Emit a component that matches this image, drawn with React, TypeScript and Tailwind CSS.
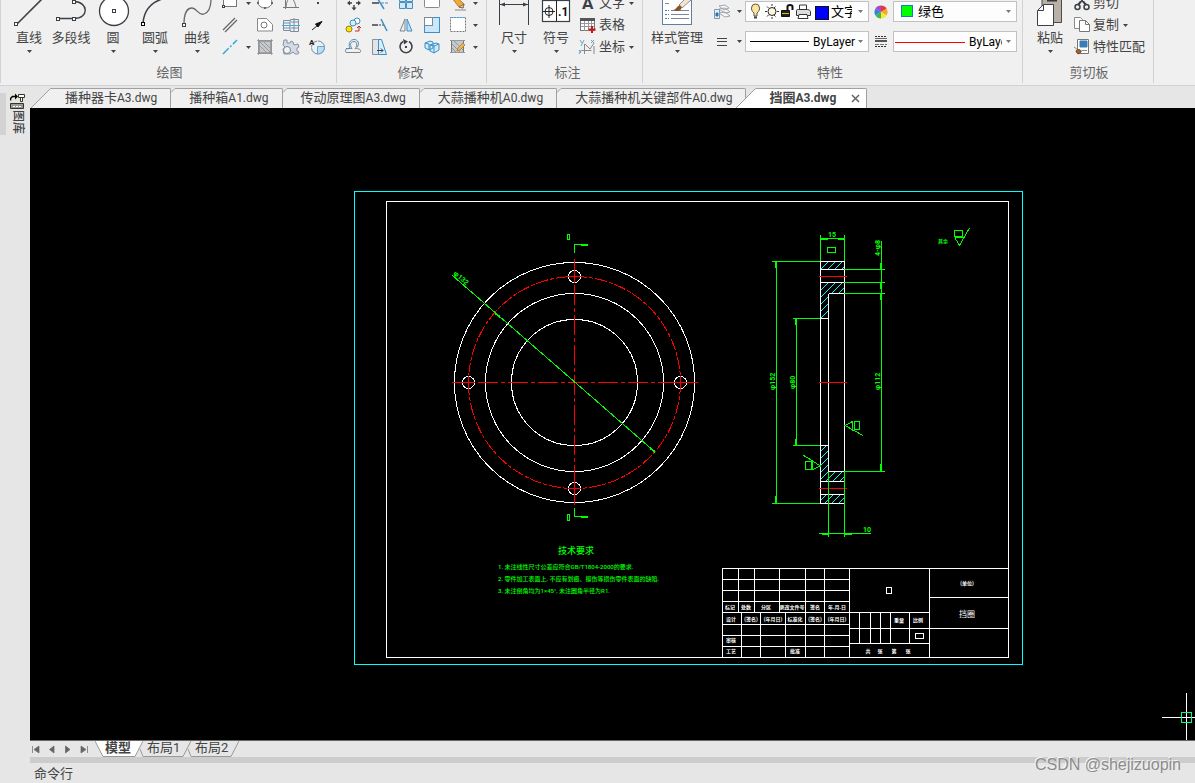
import type { ReactNode } from "react";

const INK = "#3b3f46";
const BLUE = "#3f8fc4";

interface IconProps {
  width?: number;
  height?: number;
  children: ReactNode;
}

function Icon({ width = 26, height = 22, children }: IconProps) {
  return (
    <svg
      width={width}
      height={height}
      viewBox={`0 0 ${width} ${height}`}
      fill="none"
      stroke={INK}
      className="shrink-0"
      aria-hidden="true"
    >
      {children}
    </svg>
  );
}

function Caret({ light = false }: { light?: boolean }) {
  return (
    <svg width="5" height="3" viewBox="0 0 5 3" className="shrink-0" aria-hidden="true">
      <path d="M0 0h5L2.5 3z" fill={light ? "#777" : "#444"} />
    </svg>
  );
}

function DropButton({ label, className }: { label: string; className: string }) {
  return (
    <button aria-label={label} className={`flex items-center justify-center ${className}`}>
      <Caret />
    </button>
  );
}

function Panel({ title, className, children }: { title: string; className: string; children: ReactNode }) {
  return (
    <section className={`flex h-[83px] shrink-0 flex-col border-r border-[#d2d2d2] ${className}`}>
      <div className="flex h-[58px] shrink-0 items-end overflow-hidden">{children}</div>
      <h2 className="mt-[5px] text-center leading-5 text-[#666]">{title}</h2>
    </section>
  );
}

interface LargeToolProps {
  label: string;
  caret?: boolean;
  className?: string;
  children: ReactNode;
}

function LargeTool({ label, caret = true, className = "w-[42px]", children }: LargeToolProps) {
  return (
    <button className={`flex shrink-0 flex-col items-center ${className}`}>
      {children}
      <span className="leading-5 whitespace-nowrap">{label}</span>
      <span className="flex h-[10px] pt-0.5">{caret ? <Caret /> : null}</span>
    </button>
  );
}

function SmallTool({ label, children }: { label: string; children: ReactNode }) {
  return (
    <button aria-label={label} className="block h-[22px] w-[26px]">
      <Icon>{children}</Icon>
    </button>
  );
}

function TextTool({ label, caret, children }: { label: string; caret?: boolean; children: ReactNode }) {
  return (
    <button className="flex h-[22px] items-center whitespace-nowrap">
      <Icon width={22}>{children}</Icon>
      {label}
      {caret ? (
        <span className="ml-1">
          <Caret />
        </span>
      ) : null}
    </button>
  );
}

function DrawPanel() {
  return (
    <Panel title="绘图" className="border-l pr-[5px] pl-[7px]">
      <LargeTool label="直线">
        <Icon width={42} height={28}>
          <path d="M9 24 34-1" strokeWidth="1.6" />
          <rect x="6.500" y="22.500" width="3" height="3" fill="#fff" />
        </Icon>
      </LargeTool>
      <LargeTool label="多段线" caret={false}>
        <Icon width={42} height={28}>
          <path d="M9 18.500h15C39 18.500 39 2 24 1.500" strokeWidth="1.400" />
          <rect x="6.500" y="17.500" width="3" height="3" fill="#fff" />
          <rect x="22.500" y="17.500" width="3" height="3" fill="#fff" />
          <rect x="22.500" y="0.500" width="3" height="3" fill="#fff" />
        </Icon>
      </LargeTool>
      <LargeTool label="圆">
        <Icon width={42} height={28}>
          <circle cx="22" cy="11" r="14.500" fill="#fff" strokeWidth="1.300" />
          <rect x="20.500" y="9.500" width="3" height="3" fill="#fff" />
        </Icon>
      </LargeTool>
      <LargeTool label="圆弧">
        <Icon width={42} height={28}>
          <path d="M9 23C10 11 16 3 28-1" strokeWidth="1.500" />
          <rect x="7.500" y="22.500" width="3" height="3" fill="#fff" stroke="#000" />
        </Icon>
      </LargeTool>
      <LargeTool label="曲线">
        <Icon width={42} height={28}>
          <path d="M8 24C8 14 11 8 16 8s6 8 12 6 7-8 7-15" stroke="#666a70" strokeWidth="1.300" />
          <rect x="6.500" y="23.500" width="3" height="3" fill="#fff" />
        </Icon>
      </LargeTool>
      <div>
        <SmallTool label="矩形">
          <rect x="5.500" y="2.500" width="13" height="12" fill="#fff" stroke="#777" />
          <rect x="4.500" y="13.500" width="2" height="2" fill="#fff" />
        </SmallTool>
        <SmallTool label="平行线">
          <path d="m5 16 12-12M7 18 19 6" stroke="#666" strokeWidth="1.300" />
        </SmallTool>
        <SmallTool label="中心线">
          <path d="m5 18 14-14" stroke="#34a9e0" strokeWidth="1.500" strokeDasharray="8 2 2 2" />
        </SmallTool>
      </div>
      <div>
        <DropButton label="矩形选项" className="h-[22px] w-[9px]" />
        <span className="block h-[22px]" />
        <DropButton label="中心线选项" className="h-[22px] w-[9px]" />
      </div>
      <div>
        <SmallTool label="椭圆">
          <ellipse cx="12" cy="10.500" rx="7" ry="5.500" fill="#fff" stroke="#777" />
          <path d="M4 11h2m12 0h2m-9 5h2" stroke="#666" strokeWidth="2" />
        </SmallTool>
        <SmallTool label="轮廓线">
          <path d="M4.500 4.500h9l6 6v6.500h-15z" fill="#fff" stroke="#888" />
          <circle cx="11" cy="11" r="3" stroke="#777" />
        </SmallTool>
        <SmallTool label="图案填充">
          <rect x="6" y="5" width="12" height="12" fill="#c6c9cc" stroke="#777" />
          <path d="m7 6 10 10M7 10l6 6m-2-10 6 6M4 4.500h16M4 17.500h16M5.500 3v16m13-16v16" stroke="#888" strokeWidth=".7" />
        </SmallTool>
      </div>
      <div>
        <SmallTool label="公式曲线">
          <path d="M6.500 4v13M4 15.500h16M7 15C8 4 14 2 17 15" stroke="#777" />
        </SmallTool>
        <SmallTool label="孔轴">
          <path d="M4.500 6.500h7v-1h8v12h-8v-1h-7z" fill="#eef3f7" stroke="#7d8d9c" />
          <path d="M4 9h7m0-3v11m4-13v13M5 14h6m1-6h7m-7 6h7" stroke="#7d8d9c" />
          <path d="M3 11.500h18" stroke="#46a6e2" />
        </SmallTool>
        <SmallTool label="齿形">
          <path d="M5 4h3v3h3l1-2 2 1 1 3 4-1 1 3-2 1v3l2 1-1 2h-3l-2-2-3 2H5l-1-5 2-2-2-2z" fill="#d3dae3" stroke="#8493a4" />
          <circle cx="8" cy="14" r="3.500" fill="#f4f4f4" stroke="#7b8795" />
        </SmallTool>
      </div>
      <div>
        <SmallTool label="点">
          <rect x="12" y="10" width="2" height="2" fill="#444" stroke="none" />
        </SmallTool>
        <SmallTool label="箭头">
          <path d="m7 16 6-5" stroke="#222" />
          <path d="M17 7.500 10.500 10l2.500 3z" fill="#111" stroke="#111" />
        </SmallTool>
        <SmallTool label="局部放大">
          <circle cx="13" cy="11.500" r="6.500" stroke="#6f8494" strokeDasharray="9 1" />
          <path d="M12.500 10.500h7a7 7 0 0 1-7 7.500z" fill="#b7e0f8" stroke="#64a6cf" />
          <text x="4" y="9" fontSize="8" fontWeight="700" fill="#222" stroke="none">A</text>
        </SmallTool>
      </div>
    </Panel>
  );
}

function ModifyPanel() {
  return (
    <Panel title="修改" className="pr-1.5 pl-1">
      <div>
        <SmallTool label="平移">
          <path d="M7 11h4m4 0h4m-6-7v4m0 5v4" strokeWidth="1.400" />
          <path d="m6 11 3-2.500v5zm14 0-3-2.500v5zM13 18.500l-2.500-3h5z" fill={INK} stroke="none" />
        </SmallTool>
        <SmallTool label="平移复制">
          <circle cx="16" cy="7" r="3" fill="#fff" stroke={BLUE} />
          <circle cx="12" cy="9" r="3" fill="#d9edf9" stroke={BLUE} />
          <circle cx="8" cy="15" r="3" fill="#ffe600" stroke="#917f22" />
          <path d="M14 17h4v-4m-2 1 2-2 2 2" stroke="#b62f2f" />
        </SmallTool>
        <SmallTool label="等距线">
          <path d="M5 16.500h14c2-3-1-4-5-4 3-3 2-7-1-7s-5 3-2 7c-5 0-8 0-6 4z" stroke="#7e8790" />
          <path d="M5 12.500h4C7 8 9 3.500 13 3.500s6 4 3 8" stroke={BLUE} />
        </SmallTool>
      </div>
      <div>
        <SmallTool label="裁剪">
          <path d="M5 11h7" strokeWidth="1.500" />
          <path d="M14 11h8" stroke={BLUE} strokeDasharray="3 1" />
          <path d="m9 4 8 13" stroke={BLUE} strokeWidth="1.500" />
        </SmallTool>
        <SmallTool label="延伸">
          <path d="M5 11h6" strokeWidth="1.500" />
          <path d="M12 11h6" strokeDasharray="2 1" />
          <path d="m14 5 6 12" stroke={BLUE} strokeWidth="1.500" />
        </SmallTool>
        <SmallTool label="拉伸">
          <path d="M5.500 3.500h6v15h-6z" fill="#e2e5e8" stroke="#88929b" />
          <path d="M11.500 3.500h3l5 15h-8z" fill="#d7effc" stroke={BLUE} />
          <path d="M10 14.500h6m-2-2 2 2-2 2" />
        </SmallTool>
      </div>
      <div>
        <SmallTool label="阵列">
          <path d="M6.500 3.500h6v6h-6zm7 0h6v6h-6zm-7 7h6v6h-6zm7 0h6v6h-6z" fill="#cdeafa" stroke="#4d8fb8" />
        </SmallTool>
        <SmallTool label="镜像">
          <path d="M12 5v12H7z" fill="#eee" stroke="#7a858f" />
          <path d="M14 5v12h5z" fill="#bfe3f7" stroke={BLUE} />
        </SmallTool>
        <SmallTool label="旋转">
          <path d="M10 5.500a6 6 0 1 0 6 0" strokeWidth="1.600" />
          <path d="m10 3 5 2.500-4 3z" fill={INK} stroke="none" />
          <rect x="12" y="10" width="2" height="2" fill={INK} stroke="none" />
        </SmallTool>
      </div>
      <div>
        <SmallTool label="打断">
          <rect x="5.500" y="2.500" width="15" height="13" rx="1" fill="#fff" stroke="#8a8a8a" />
        </SmallTool>
        <SmallTool label="比例缩放">
          <rect x="5.500" y="3.500" width="15" height="15" fill="#c9e8fa" stroke={BLUE} />
          <rect x="5.500" y="3.500" width="8" height="8" fill="#fff" stroke="#7b8a96" />
        </SmallTool>
        <SmallTool label="分解">
          <path d="m6 7 5-2 3 1v6l-4 2-4-2zm5 2 6-2 3 1v6l-5 3-4-2zm0 0 4 1 5-2m-5 2v7M6 7l4 1v6" fill="#cdebfa" stroke={BLUE} />
        </SmallTool>
      </div>
      <div>
        <SmallTool label="删除">
          <path d="m7 6 3-2 9 8-1 4-4-1z" fill="#f2aa3c" stroke="#b77a23" />
          <path d="m14 15 4 1 1-4z" fill="#ecd7b8" stroke="#806d54" />
          <path d="m6 6 3-3" stroke="#d86b5c" strokeWidth="3" />
          <path d="M10 18h11" stroke="#888" />
        </SmallTool>
        <SmallTool label="选择">
          <rect x="5.500" y="3.500" width="15" height="14" fill="#fff" stroke="#777" strokeDasharray="2 1" />
          <path d="M6 3.500h14" stroke="#3ca4dc" strokeDasharray="2 1" />
        </SmallTool>
        <SmallTool label="填充编辑">
          <rect x="6.500" y="4.500" width="12" height="12" fill="#c5c8cb" stroke="#777" />
          <path d="m7 8 8 8M7 12l4 4M9 5l9 9M5 4.500h15M5 16.500h15" stroke="#979797" />
          <path d="m12 15 1-3 5-5 2 2-5 5z" fill="#f1b34b" stroke="#9e7330" strokeWidth=".7" />
        </SmallTool>
      </div>
      <div>
        <DropButton label="删除选项" className="h-[22px] w-[9px]" />
        <DropButton label="选择选项" className="h-[22px] w-[9px]" />
        <DropButton label="填充编辑选项" className="h-[22px] w-[9px]" />
      </div>
    </Panel>
  );
}

function AnnotatePanel() {
  return (
    <Panel title="标注" className="w-[156px] pl-1.5">
      <LargeTool label="尺寸">
        <Icon width={42} height={28}>
          <path d="M6.500 0v25M35.500 0v25M7 4.500h28" />
          <path d="m7 4.500 5-2v4zm28 0-5-2v4z" fill={INK} stroke="none" />
        </Icon>
      </LargeTool>
      <LargeTool label="符号">
        <Icon width={42} height={28}>
          <rect x="7.500" y="0.500" width="27" height="21" fill="#fff" strokeWidth="1.200" />
          <path d="M21.500 0v21M8 11.500h12M14 5v13" stroke="#222" />
          <circle cx="14" cy="11.500" r="4" stroke="#222" />
          <text x="23" y="16" fontSize="12" fontWeight="700" fill="#111" stroke="none">.1</text>
        </Icon>
      </LargeTool>
      <div>
        <TextTool label="文字" caret>
          <text x="5" y="17" fontSize="17" fontWeight="700" fill={INK} stroke="none">A</text>
        </TextTool>
        <TextTool label="表格">
          <rect x="3.500" y="4.500" width="14" height="12" fill="#fff" stroke="#777" />
          <path d="M3 5.500h15" stroke="#555" strokeWidth="3" />
          <path d="M4 9.500h13m-13 3h13M7.500 7v10m4-10v10m3-10v10" stroke="#999" />
          <path d="M15 12v7m-3.500-3.500h7" stroke="#c4161c" strokeWidth="2" />
        </TextTool>
        <TextTool label="坐标" caret>
          <path d="M7.500 8v10m-3-3.500h10M8 8l5 5 4-6m0 11v-8" stroke="#888" />
          <path d="m3 4 2 3m2-3-3 6m10-6 3 3m0-3-3 3M2 14l2 3m0-3-2 4" stroke={BLUE} strokeWidth=".8" />
        </TextTool>
      </div>
    </Panel>
  );
}

const wheel = ["#e53935", "#f5a623", "#f7e733", "#43b649", "#2f80e0", "#a04bd1"];

function ColorWheel() {
  return (
    <Icon width={14} height={14}>
      {wheel.map((color, i) => (
        <path key={color} d="M7 7V0.500A6.500 6.500 0 0 1 12.630 3.750z" fill={color} stroke="none" transform={`rotate(${i * 60} 7 7)`} />
      ))}
    </Icon>
  );
}

interface ComboProps {
  label: string;
  value: string;
  selectClass: string;
  children: ReactNode;
}

function Combo({ label, value, selectClass, children }: ComboProps) {
  return (
    <label className="flex h-[21px] w-[124px] items-center border border-[#c1c1c1] bg-[#fdfdfd] pr-[5px] pl-px text-black">
      {children}
      <select aria-label={label} className={`shrink-0 appearance-none overflow-hidden bg-transparent text-clip ${selectClass}`}>
        <option>{value}</option>
      </select>
      <span className="ml-auto flex">
        <Caret light />
      </span>
    </label>
  );
}

function PropertiesPanel() {
  return (
    <Panel title="特性" className="pr-[5px]">
      <LargeTool label="样式管理" className="w-[68px]">
        <Icon width={68} height={28}>
          <rect x="19.500" y="-2" width="29" height="26.500" fill="#fff" stroke="#5f7f9f" />
          <path d="M22 10.500h4m-4 4h4m-4 4h4" stroke="#4d78a3" strokeDasharray="2 1" />
          <path d="M28 10.500h18m-18 4h18m-18 4h18M22 3.500h4" stroke="#79899a" />
          <path d="m36 5 8-8 4 3-9 8z" fill="#f2e5cf" stroke="#666" strokeWidth=".7" />
          <path d="M30 10c4 0 4-6 8-4 2 3-2 7-8 4z" fill="#8d5125" stroke="none" />
        </Icon>
      </LargeTool>
      <div className="flex h-[57px] items-start">
        <div className="flex flex-col gap-[9px]">
          <div className="flex h-[21px] items-center">
            <Icon width={22}>
              <path d="m8 5 6-1 4 3-5 2zm0 3 6-1 5 4-5 1zm0 4 6-1 5 4-5 1z" fill="#f8f8f8" stroke="#a0a5aa" />
              <path d="M3.500 8.500h5v9h-5z" fill="#e9eff4" stroke="#7c9ab6" />
              <path d="M5 12h2v3H5z" fill="#2d73b5" stroke="#2d73b5" />
            </Icon>
            <DropButton label="图层工具" className="h-[21px] w-3" />
          </div>
          <div className="flex h-[21px] items-center">
            <Icon width={22} height={21}>
              <path d="M6 7.500h10m-10 3h10m-10 4h10" stroke="#444" />
            </Icon>
            <DropButton label="线宽工具" className="h-[21px] w-3" />
          </div>
        </div>
        <div className="flex flex-col gap-[9px]">
          <Combo label="图层" value="文字" selectClass="w-[21px]">
            <Icon width={84} height={19}>
              <path d="M7 14v-3C4.500 9 4.500 7 4.500 6a4 4 0 0 1 8 0c0 1 0 3-2.500 5v3z" fill="#ffe59a" stroke="#555" />
              <path d="M7 15.500h3" stroke="#444" strokeWidth="2" />
              <circle cx="25" cy="9.500" r="4" fill="#fff7e0" stroke="#222" />
              <path d="M25 2v2m0 11v2M18 9.500h2m10 0h2M20 4.500l1.500 1.500m7-1.500L27 6m-7 8.500 1.500-1.500m7 1.500L27 13" stroke="#333" />
              <path d="M34.500 8.500h8v6h-8z" fill="#222" stroke="#111" />
              <path d="M35 11.500h7" stroke="#d7c800" />
              <path d="M40.500 9V4.500c0-2 5-2 5 0V8" stroke="#111" strokeWidth="2" />
              <path d="M52.500 8V3h7v5" fill="#fff" stroke="#333" />
              <path d="M49.500 8.500c0-1 1-1 2-1h9c1 0 3 1 3 2v4h-14z" fill="#dcdcdc" stroke="#333" />
              <path d="M52 12.500h8l1 4H51z" fill="#fff" stroke="#333" />
              <rect x="68.500" y="4.500" width="13" height="13" fill="#00f" stroke="#111" />
            </Icon>
          </Combo>
          <Combo label="线型" value="ByLayer" selectClass="w-[44px] text-xs">
            <Icon width={66} height={19}>
              <path d="M3 9.500h59" stroke="#000" />
            </Icon>
          </Combo>
        </div>
        <div className="flex w-6 flex-col gap-[9px]">
          <div className="flex h-[21px] items-center justify-center">
            <ColorWheel />
          </div>
          <div className="flex h-[21px] items-center justify-center">
            <Icon width={14} height={13}>
              <path d="M1 1.500h12M1 11.500h12" stroke="#333" strokeDasharray="2 1" />
              <path d="M1 3.500h12" stroke="#666" />
              <path d="M1 6h12" stroke="#555" strokeWidth="2" />
              <path d="M1 9.500h12" stroke="#777" strokeDasharray="4 1" />
            </Icon>
          </div>
        </div>
        <div className="flex flex-col gap-[9px]">
          <Combo label="颜色" value="绿色" selectClass="w-[60px]">
            <Icon width={23} height={19}>
              <rect x="6.500" y="3.500" width="11" height="11" fill="#0f0" stroke="#1976d2" />
            </Icon>
          </Combo>
          <Combo label="线宽" value="ByLayer" selectClass="w-[33px] text-xs">
            <Icon width={74} height={19}>
              <path d="M0 10.500h70" stroke="#f00" />
            </Icon>
          </Combo>
        </div>
      </div>
    </Panel>
  );
}

function ClipboardPanel() {
  return (
    <Panel title="剪切板" className="w-[131px] pr-1 pl-1.5">
      <LargeTool label="粘贴">
        <Icon width={42} height={28}>
          <path d="M13-2h19.500v24.500H13z" fill="#b9b0a6" stroke="#4b4b4b" />
          <path d="M18 0h10" stroke="#33373d" strokeWidth="3" />
          <path d="m8.500 10.500 6-6h10v21h-16z" fill="#fff" />
          <path d="M14.500 5v5.500H9" />
        </Icon>
      </LargeTool>
      <div>
        <TextTool label="剪切">
          <path d="m6 2 9 11M16 2 7 13" strokeWidth="2" />
          <circle cx="6.500" cy="15" r="2.500" strokeWidth="1.500" />
          <circle cx="15.500" cy="15" r="2.500" strokeWidth="1.500" />
        </TextTool>
        <TextTool label="复制" caret>
          <path d="M3.500 3.500h6l2 2v9h-8z" fill="#fff" stroke="#8a8a8a" />
          <path d="M8.500 6.500h6l4 4v7h-10z" fill="#fff" stroke="#777" />
          <path d="M14.500 6.500v4h4" stroke="#777" />
        </TextTool>
        <TextTool label="特性匹配">
          <path d="M6.500 3.500h11v14h-11z" fill="#fff" stroke="#777" />
          <path d="M9 5h7v6H9z" fill="#3a7cb8" stroke="#3a7cb8" />
          <path d="M11 14.500h5" stroke="#888" />
          <path d="m3 11 4 3" stroke="#888" />
          <path d="M5 15c2-3 6-1 5 1s-4 3-5-1z" fill="#a0622d" stroke="#7a451c" />
        </TextTool>
      </div>
    </Panel>
  );
}

const files = [
  { name: "播种器卡", suffix: "A3.dwg" },
  { name: "播种箱", suffix: "A1.dwg" },
  { name: "传动原理图", suffix: "A3.dwg" },
  { name: "大蒜播种机", suffix: "A0.dwg" },
  { name: "大蒜播种机关键部件", suffix: "A0.dwg" },
];

function TabSlope({ fill }: { fill: string }) {
  return (
    <svg width="20" height="20" viewBox="0 0 20 20" className="shrink-0" aria-hidden="true">
      <path d="M0 20 20 .5V20z" fill={fill} />
      <path d="M0 20 19.500.5h.5" fill="none" stroke="#a0a0a0" />
    </svg>
  );
}

function FileTabs() {
  return (
    <nav className="flex h-[22px] items-end overflow-hidden pl-px">
      {files.map((file, i) => (
        <button key={file.name} className="flex h-5 shrink-0 items-end whitespace-nowrap">
          {i === 0 ? (
            <TabSlope fill="#f0f0f0" />
          ) : (
            <svg width="4" height="20" viewBox="0 0 4 20" aria-hidden="true">
              <path d="M0 4 4 0v20H0z" fill="#f0f0f0" />
              <path d="M0 4.500 4 .5" fill="none" stroke="#a0a0a0" />
            </svg>
          )}
          <span className="h-5 rounded-tr-xs border-t border-r border-[#a0a0a0] bg-[#f0f0f0] pr-[13px] pl-[14px] leading-[18px]">
            {file.name}
            <span className="text-xs">{file.suffix}</span>
          </span>
        </button>
      ))}
      <div className="relative -ml-[10px] flex h-5 shrink-0 whitespace-nowrap">
        <TabSlope fill="#ffffff" />
        <div className="flex items-start rounded-tr-xs border-t border-r border-[#a0a0a0] bg-white pr-1.5 pl-[13px] font-bold">
          <button className="leading-[18px]">
            挡圈<span className="text-xs">A3.dwg</span>
          </button>
          <button aria-label="关闭" className="mt-[5px] ml-[15px]">
            <svg width="9" height="9" viewBox="0 0 9 9" className="block" aria-hidden="true">
              <path d="m1 1 7 7M8 1 1 8" stroke="#666" strokeWidth="1.500" />
            </svg>
          </button>
        </div>
      </div>
    </nav>
  );
}

function LibraryRail() {
  return (
    <aside className="flex w-[30px] shrink-0 items-start pt-[7px]">
      <span className="h-[42px] w-1.5 bg-[#d3d3d3]" />
      <button className="ml-1 flex flex-col items-center">
        <svg width="15" height="17" viewBox="0 0 15 17" fill="none" stroke="#333" aria-hidden="true">
          <path d="M0 0h15v17H0z" fill="#e6e6d8" stroke="none" />
          <path d="M.500 7.500v-2l2-2h3" stroke="#000" strokeWidth="1.500" />
          <path d="m5 .5 3 3-3 3z" fill="#000" stroke="none" />
          <path d="M8.500 1.500h6v3h-6zm2 3v4h2v-4" fill="#fff" />
          <path d="M.500 10.500h13v5H.500z" fill="#999" />
          <path d="M3 13.500h8" stroke="#fff" strokeDasharray="2 1" />
        </svg>
        <span className="text-xs leading-3 font-medium [text-orientation:sideways] [writing-mode:vertical-rl]">图库</span>
      </button>
    </aside>
  );
}

function FrontView() {
  return (
    <g>
      <g stroke="#fff">
        <circle cx="574.500" cy="382.500" r="120" />
        <circle cx="574.500" cy="382.500" r="89" />
        <circle cx="574.500" cy="382.500" r="63" />
        <circle cx="574.500" cy="276.500" r="6" />
        <circle cx="574.500" cy="488.500" r="6" />
        <circle cx="468.500" cy="382.500" r="6" />
        <circle cx="680.500" cy="382.500" r="6" />
      </g>
      <g stroke="#f00">
        <circle cx="574.500" cy="382.500" r="106" strokeDasharray="12 2 4 2" />
        <path d="M452 382.500h246M574.500 259v246" strokeDasharray="20 3 4 3" strokeDashoffset="4" />
        <path d="M568 276.500h13m-13 212h13M468.500 376v13m212-13v13M452 382.500h23m199 0h24M574.500 259v24m0 199v23" />
      </g>
      <g stroke="#0f0">
        <path d="m452.500 275.500 202.500 176.500" />
        <path d="m495 313 5 4m150 131 5 4" strokeWidth="2" />
        <path d="M574.500 253v-8.500H588M574.500 508v8.500H588" />
        <path d="M581 245h7M581 517h7" strokeWidth="2" />
        <path d="M567.500 234.500h2v5h-2zm0 280h2v6h-2z" />
      </g>
      <text x="453" y="274" transform="rotate(41 453 274)" fontSize="7" fontWeight="700" fill="#0f0">
        φ132
      </text>
    </g>
  );
}

const hatch = Array.from({ length: 42 }, (_, i) => 1076 + i * 7);

function SideView() {
  return (
    <g>
      <clipPath id="section">
        <path d="M821 262h23v7h-23zM821 283h23v10h-16v25h-7zM821 446h7v26h16v9h-23zM821 495h23v8h-23z" />
      </clipPath>
      <g clipPath="url(#section)" stroke="#0ff">
        {hatch.map((sum) => (
          <path key={sum} d={`M820 ${sum - 820}L845 ${sum - 845}`} />
        ))}
      </g>
      <path
        stroke="#fff"
        d="M820.500 261.500h24v242h-24zM828.500 293.500v178M820.500 269.500h24M820.500 282.500h24M828.500 293.500h16M820.500 318.500h8M820.500 445.500h8M828.500 471.500h16M820.500 481.500h24M820.500 494.500h24"
      />
      <path stroke="#f00" d="M819 276.500h28M819 382.500h28M819 488.500h28" />
      <g stroke="#0f0">
        <path d="M820.500 235v26m24-26v26M820 238.500h25M827.500 247.500h8v5h-8z" />
        <path d="M881.500 241v231M844 269.500h41m-41 13h41m-41 11h41m-41 178h41" />
        <path d="M776.500 261v243M772 261.500h48m-48 242h48M796.500 318v128M793 318.500h27m-27 127h27" />
        <path d="M828.500 472v65m16-65v65M819 533.500h52" />
        <path
          strokeWidth="2"
          d="M821 239h7m10 0h6M881 263v6m0 14v6m0 5v6m0 164v7M776 262v6m0 228v7M796 319v6m0 114v6M822 534h6m17 0h7"
        />
        <path d="m863 435.500-18-10 7.500-4v9M854.500 421.500h5v8h-5zM803 455l17.500 11-8.500 4v-10M805.500 461.500h6v8h-6z" />
        <path d="M954.500 230.500h8v6h-8zM954.500 237.500h8M955 238l4.500 7.500L969.500 228" />
      </g>
      <g fill="#0f0" fontSize="7" fontWeight="700">
        <text x="828" y="237">15</text>
        <text x="863" y="532">10</text>
        <text x="880" y="256" transform="rotate(-90 880 256)">4-φ8</text>
        <text x="880" y="390" transform="rotate(-90 880 390)">φ112</text>
        <text x="775" y="390" transform="rotate(-90 775 390)">φ152</text>
        <text x="795" y="389" transform="rotate(-90 795 389)">φ80</text>
        <text x="938" y="243" fontSize="5">其余</text>
      </g>
    </g>
  );
}

const blockLabels: [number, number, string][] = [
  [730, 609, "标记"],
  [746, 609, "处数"],
  [766, 609, "分区"],
  [792, 609, "更改文件号"],
  [815, 609, "签名"],
  [837, 609, "年.月.日"],
  [731, 621, "设计"],
  [751, 621, "(签名)"],
  [773, 621, "(年月日)"],
  [795, 621, "标准化"],
  [815, 621, "(签名)"],
  [837, 621, "(年月日)"],
  [731, 642, "审核"],
  [731, 653, "工艺"],
  [795, 653, "批准"],
  [899, 622, "重量"],
  [918, 622, "比例"],
  [868, 653, "共"],
  [880, 653, "张"],
  [894, 653, "第"],
  [908, 653, "张"],
  [967, 585, "(单位)"],
];

function TitleBlock() {
  return (
    <g>
      <path
        stroke="#fff"
        d="M722.500 657V568.500H1008M722 579.500h127M722 590.500h127M722 601.500h127M722 612.500h207M722 624.500h127M722 635.500h127M722 646.500h127M738.500 568v44M754.500 568v44M779.500 568v44M805.500 568v89M824.500 568v89M849.500 568v89M929.500 568v89M741.500 612v45M760.500 612v45M785.500 612v45M849 628.500h80M849 643.500h80M859.500 612v31M870.500 612v31M880.500 612v31M890.500 612v31M909.500 612v31M929 597.500h79M929 628.500h79M886.500 587.500h5v6h-5zM915.500 633.500h8v5h-8z"
      />
      <g fill="#fff" fontSize="5" fontWeight="700" textAnchor="middle">
        {blockLabels.map(([x, y, label]) => (
          <text key={`${x}-${y}`} x={x} y={y}>
            {label}
          </text>
        ))}
        <text x="967" y="617" fontSize="8" fontWeight="400">
          挡圈
        </text>
      </g>
    </g>
  );
}

function DrawingCanvas() {
  return (
    <svg className="block h-full w-full bg-black" fill="none" shapeRendering="crispEdges" role="img" aria-label="挡圈A3.dwg">
      <g transform="translate(-30 -108)">
        <rect x="354.500" y="191.500" width="668" height="473" stroke="#0ff" />
        <rect x="386.500" y="201.500" width="622" height="456" stroke="#fff" />
        <FrontView />
        <SideView />
        <TitleBlock />
        <g fill="#0f0" fontSize="6" fontWeight="500">
          <text x="558" y="554" fontSize="9">技术要求</text>
          <text x="498" y="569">1. 未注线性尺寸公差应符合GB/T1804-2000的要求.</text>
          <text x="498" y="581">2. 零件加工表面上, 不应有划痕、擦伤等损伤零件表面的缺陷.</text>
          <text x="498" y="593">3. 未注倒角均为1×45°, 未注圆角半径为R1.</text>
        </g>
        <path d="M1162 717.500h40M1186.500 693v60" stroke="#fff" />
        <rect x="1181.500" y="712.500" width="10" height="10" stroke="#00ff80" />
      </g>
    </svg>
  );
}

const navArrows = [
  { label: "第一个", d: "M1.500 1v7M8 1v7L3 4.500z" },
  { label: "上一个", d: "M7 1v7L2.500 4.500z" },
  { label: "下一个", d: "M2.500 1v7L7 4.500z" },
  { label: "最后一个", d: "M8.500 1v7M2 1v7l5-3.500z" },
];

function SheetEdge({ d, fill }: { d: string; fill?: string }) {
  return (
    <svg width="8" height="16" viewBox="0 0 8 16" className="shrink-0" fill="none" aria-hidden="true">
      {fill ? <path d={fill} fill="#fff" /> : null}
      <path d={d} stroke="#999" />
    </svg>
  );
}

function LayoutTabs() {
  return (
    <nav className="flex h-[17px] items-start border-t border-[#666]">
      <div className="flex w-[65px] shrink-0 justify-between pt-1 pr-1.5 pl-px">
        {navArrows.map((arrow) => (
          <button key={arrow.label} aria-label={arrow.label}>
            <svg width="10" height="9" viewBox="0 0 10 9" className="block" fill="#666" stroke="#666" strokeWidth=".7" aria-hidden="true">
              <path d={arrow.d} />
            </svg>
          </button>
        ))}
      </div>
      <SheetEdge d="M0 0 8 15.500" fill="M0 0h8v16z" />
      <button className="flex h-4 w-8 border-b border-[#999] bg-white pl-0.5 leading-[14px] font-bold">模型</button>
      <SheetEdge d="M0 15.500 8 0M5 8l3 7.500" fill="M0 0h8L0 16z" />
      <button className="flex h-4 w-10 border-b border-[#999] pl-1 leading-[14px]">布局1</button>
      <SheetEdge d="M0 15.500 8 0M5 8l3 7.500" />
      <button className="flex h-4 w-10 border-b border-[#999] pl-1 leading-[14px]">布局2</button>
      <SheetEdge d="M0 15.500 8 0" />
    </nav>
  );
}

export default function App() {
  return (
    <div className="relative flex h-screen flex-col overflow-hidden bg-[#e6e6e6] font-[Roboto,'Noto_Sans_CJK_SC',sans-serif] text-[13px] text-[#444]">
      <header className="flex h-[86px] shrink-0 items-start overflow-hidden border-b border-[#d2d2d2] bg-[#f0f0f0]">
        <DrawPanel />
        <ModifyPanel />
        <AnnotatePanel />
        <PropertiesPanel />
        <ClipboardPanel />
      </header>
      <div className="flex min-h-0 flex-1">
        <LibraryRail />
        <div className="flex min-w-0 flex-1 flex-col">
          <FileTabs />
          <main className="min-h-0 flex-1">
            <DrawingCanvas />
          </main>
          <LayoutTabs />
          <div className="h-1.5 bg-[#ccc]" />
          <p className="h-5 pl-1 leading-[22px]">命令行</p>
        </div>
      </div>
      <p className="absolute right-[14px] bottom-1.5 font-['Liberation_Sans',sans-serif] text-base leading-6 text-[#8c8c8c] [text-shadow:-1px_-1px_#f6f6f6]">
        CSDN @shejizuopin
      </p>
    </div>
  );
}
